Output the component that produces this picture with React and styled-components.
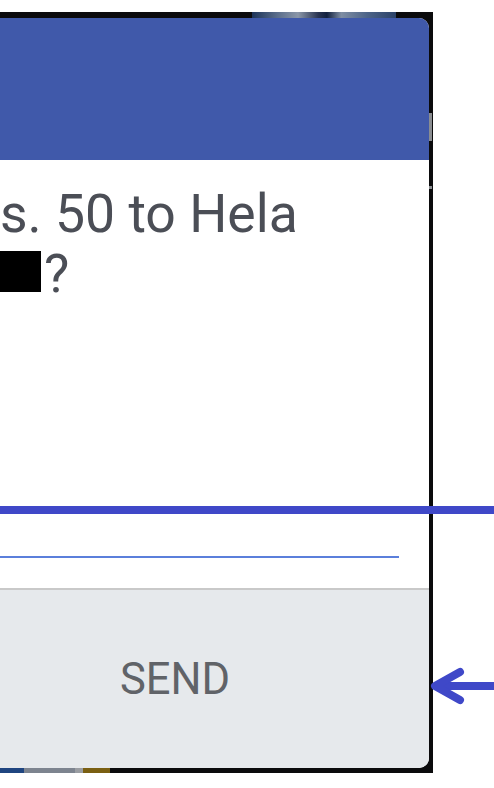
import styled, { createGlobalStyle } from "styled-components";

const GlobalStyle = createGlobalStyle`
  html, body {
    margin: 0;
    padding: 0;
    background: #ffffff;
  }
  body {
    font-family: Roboto, "Liberation Sans", sans-serif;
  }
`;

const Page = styled.div`
  position: relative;
  width: 494px;
  height: 788px;
  overflow: hidden;
  padding-top: 12px;
  box-sizing: border-box;
`;

const Phone = styled.div`
  width: 433px;
  height: 761px;
  background: #0b0b0c;
  display: grid;
  grid-template-columns: 429px 4px;
  grid-template-rows: 6px 750px 5px;
`;

const TopStrip = styled.div`
  grid-column: 1 / 3;
  display: flex;
`;

const Wallpaper = styled.div`
  margin-left: 252px;
  width: 144px;
  height: 100%;
  background: linear-gradient(
    90deg,
    #1c3358 0%,
    #5c6f8c 18%,
    #8b97a8 32%,
    #2a3552 46%,
    #11203e 52%,
    #7f8ea3 62%,
    #4d6488 80%,
    #2b4268 100%
  );
`;

const Dialog = styled.div`
  display: flex;
  flex-direction: column;
  border-radius: 0 10px 10px 0;
  overflow: hidden;
  background: #ffffff;
`;

const Header = styled.div`
  height: 142px;
  flex-shrink: 0;
  background: #4059aa;
`;

const Body = styled.div`
  flex: 1;
  display: flex;
  flex-direction: column;
  padding: 24px 30px 30px 0;
`;

const Message = styled.p`
  margin: 0;
  font-size: 53.5px;
  line-height: 60px;
  color: #4b4e56;
`;

const Redacted = styled.span`
  display: inline-block;
  width: 41px;
  height: 41px;
  margin-right: 3px;
  background: #000000;
`;

const Input = styled.div`
  margin-top: auto;
  height: 2px;
  background: #5b7fdb;
`;

const Actions = styled.div`
  height: 178px;
  flex-shrink: 0;
  border-top: 2px solid #c9c9c9;
  background: #e6e9ec;
  display: flex;
  align-items: center;
  padding-left: 120px;
`;

const ActionButton = styled.button`
  border: none;
  background: none;
  padding: 0;
  font-family: Roboto, "Liberation Sans", sans-serif;
  font-size: 43.5px;
  color: #606368;
  cursor: pointer;
`;

const SideRail = styled.div`
  display: flex;
  flex-direction: column;
  align-items: flex-start;
  padding-top: 95px;
`;

const SideMark = styled.div`
  width: 3px;
  height: ${(p) => p.$h}px;
  margin-bottom: ${(p) => p.$gap || 0}px;
  background: #8a8d91;
`;

const BottomStrip = styled.div`
  grid-column: 1 / 3;
  display: flex;
`;

const Swatch = styled.div`
  width: ${(p) => p.$w}px;
  height: 100%;
  background: ${(p) => p.$c};
`;

const Marker = styled.div`
  position: absolute;
  left: 0;
  top: 506px;
  width: 494px;
  height: 8px;
  background: #3f48c8;
`;

const Arrow = styled.svg`
  position: absolute;
  left: 430px;
  top: 666px;
`;

export default function App() {
  return (
    <>
      <GlobalStyle />
      <Page>
        <Phone>
          <TopStrip>
            <Wallpaper />
          </TopStrip>
          <Dialog>
            <Header />
            <Body>
              <Message>
                s. 50 to Hela
                <br />
                <Redacted />?
              </Message>
              <Input />
            </Body>
            <Actions>
              <ActionButton>SEND</ActionButton>
            </Actions>
          </Dialog>
          <SideRail>
            <SideMark $h={28} $gap={45} />
            <SideMark $h={3} />
          </SideRail>
          <BottomStrip>
            <Swatch $w={24} $c="#1f4580" />
            <Swatch $w={51} $c="#7d848f" />
            <Swatch $w={8} $c="#9a9da2" />
            <Swatch $w={27} $c="#7a5f12" />
          </BottomStrip>
        </Phone>
        <Marker />
        <Arrow width="64" height="40" viewBox="0 0 64 40">
          <rect x="6" y="16" width="58" height="8" fill="#3f48c8" />
          <polyline
            points="30,6 5,20 30,34"
            fill="none"
            stroke="#3f48c8"
            strokeWidth="8"
            strokeLinecap="round"
            strokeLinejoin="round"
          />
        </Arrow>
      </Page>
    </>
  );
}
